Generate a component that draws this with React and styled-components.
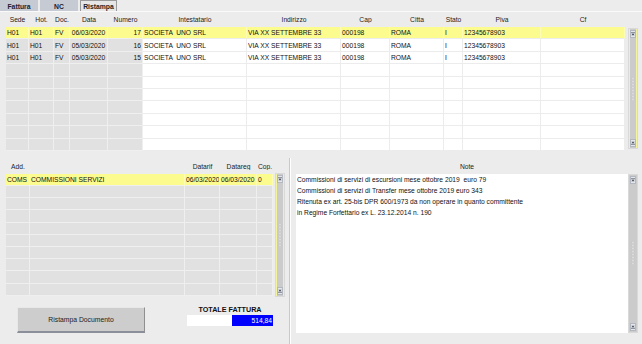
import React from 'react';
import styled, { createGlobalStyle } from 'styled-components';

const GlobalStyle = createGlobalStyle`
  html, body { margin: 0; padding: 0; background: #ececec; }
  body { font-family: "Liberation Sans", Arial, sans-serif; }
`;

const topCols = [
  { key: 'sede', title: 'Sede', w: 23, gray: true },
  { key: 'hot', title: 'Hot.', w: 25, gray: true },
  { key: 'doc', title: 'Doc.', w: 16, gray: true },
  { key: 'data', title: 'Data', w: 38, gray: true, align: 'center' },
  { key: 'num', title: 'Numero', w: 35, gray: true, align: 'right' },
  { key: 'int', title: 'Intestatario', w: 104 },
  { key: 'ind', title: 'Indirizzo', w: 94 },
  { key: 'cap', title: 'Cap', w: 49 },
  { key: 'citta', title: 'Citta', w: 54 },
  { key: 'stato', title: 'Stato', w: 19 },
  { key: 'piva', title: 'Piva', w: 78 },
  { key: 'cf', title: 'Cf', w: 84 },
];

const topRows = [
  { sede: 'H01', hot: 'H01', doc: 'FV', data: '06/03/2020', num: '17', int: 'SOCIETA  UNO SRL', ind: 'VIA XX SETTEMBRE 33', cap: '000198', citta: 'ROMA', stato: 'I', piva: '12345678903', cf: '' },
  { sede: 'H01', hot: 'H01', doc: 'FV', data: '05/03/2020', num: '16', int: 'SOCIETA  UNO SRL', ind: 'VIA XX SETTEMBRE 33', cap: '000198', citta: 'ROMA', stato: 'I', piva: '12345678903', cf: '' },
  { sede: 'H01', hot: 'H01', doc: 'FV', data: '05/03/2020', num: '15', int: 'SOCIETA  UNO SRL', ind: 'VIA XX SETTEMBRE 33', cap: '000198', citta: 'ROMA', stato: 'I', piva: '12345678903', cf: '' },
];

const addCols = [
  { key: 'add', title: 'Add.', w: 24, gray: true },
  { key: 'desc', title: '', w: 155, gray: true },
  { key: 'rif', title: 'Datarif', w: 35, gray: true },
  { key: 'reg', title: 'Datareg', w: 37, gray: true },
  { key: 'cop', title: 'Cop.', w: 16, gray: true },
];

const addRows = [
  { add: 'COMS', desc: 'COMMISSIONI SERVIZI', rif: '06/03/2020', reg: '06/03/2020', cop: '0' },
];

const notes = [
  'Commissioni di servizi di escursioni mese ottobre 2019  euro 79',
  'Commissioni di servizi di Transfer mese ottobre 2019 euro 343',
  'Ritenuta ex art. 25-bis DPR 600/1973 da non operare in quanto committente',
  'in Regime Forfettario ex L. 23.12.2014 n. 190',
];

const Page = styled.div`
  width: 642px;
  height: 344px;
  background: #ececec;
  display: flex;
  flex-direction: column;
  overflow: hidden;
  font-size: 6.7px;
  color: #111;
`;

const TabBar = styled.div`
  height: 11px;
  display: flex;
  align-items: stretch;
  gap: 2px;
  border-bottom: 1px solid #fafafa;
  background: #ececec;
`;

const Tab = styled.div`
  width: ${p => p.$w}px;
  display: flex;
  align-items: center;
  justify-content: center;
  font-weight: bold;
  font-size: 6.8px;
  color: ${p => (p.$active ? '#222' : '#1c2333')};
  background: ${p => (p.$active ? '#e6e6e6' : '#c5cad3')};
  border: 1px solid ${p => (p.$active ? '#9a9a9a' : '#c5cad3')};
  border-bottom: none;
  box-sizing: border-box;
`;

const TopPanel = styled.div`
  display: flex;
  gap: 3px;
  padding: 0 4px 0 6px;
`;

const GridBox = styled.div`
  display: flex;
  flex-direction: column;
`;

const HeaderRow = styled.div`
  display: flex;
  height: ${p => p.$h}px;
  align-items: center;
`;

const HeadCell = styled.div`
  width: ${p => p.$w}px;
  text-align: center;
  white-space: nowrap;
  overflow: hidden;
  color: #222;
`;

const Row = styled.div`
  display: flex;
  height: ${p => p.$h}px;
`;

const Cell = styled.div`
  width: ${p => p.$w}px;
  box-sizing: border-box;
  padding: 0 1px;
  display: flex;
  align-items: center;
  justify-content: ${p => (p.$align === 'right' ? 'flex-end' : p.$align === 'center' ? 'center' : 'flex-start')};
  white-space: pre;
  overflow: hidden;
  background: ${p => (p.$hl ? '#fbfb8e' : p.$gray ? '#e1e1e1' : '#ffffff')};
  border-right: 1px solid ${p => (p.$hl ? 'rgba(255,255,255,0.35)' : p.$gray ? '#efefef' : '#ececec')};
  border-bottom: 1px solid ${p => (p.$gray ? '#efefef' : '#ececec')};
`;

const ScrollBar = styled.div`
  width: 10px;
  height: ${p => p.$h}px;
  margin-top: ${p => p.$top}px;
  box-sizing: border-box;
  border: 1px solid #d9d9d9;
  background: #cbcbcb;
  display: flex;
  flex-direction: column;
  align-items: stretch;
  box-shadow: ${p => (p.$yellow ? 'inset 1px 0 0 #f4f49a, inset -1px 0 0 #f4f49a' : 'none')};
`;

const ScrollBtn = styled.div`
  height: 8px;
  margin: 1px;
  box-sizing: border-box;
  background: #e4e6ea;
  border: 1px solid #b3b7bf;
  display: flex;
  align-items: center;
  justify-content: center;
`;

const Track = styled.div`
  flex: 1;
  display: flex;
  align-items: center;
  justify-content: center;
`;

const Lower = styled.div`
  flex: 1;
  display: flex;
  margin-top: 4px;
`;

const LeftPane = styled.div`
  width: 289px;
  display: flex;
  flex-direction: column;
  padding: 5px 0 0 6px;
  box-sizing: border-box;
`;

const AddArea = styled.div`
  display: flex;
  gap: 2px;
`;

const Divider = styled.div`
  width: 1px;
  border-left: 1px solid #c9c9c9;
  background: #fff;
  margin-top: 3px;
`;

const ActionBar = styled.div`
  display: flex;
  align-items: flex-start;
  gap: 42px;
  margin: 10px 0 0 11px;
`;

const Button = styled.button`
  width: 128px;
  height: 26px;
  background: #cdcdcd;
  border: 1px solid #e8e8e8;
  border-right-color: #8f8f8f;
  border-bottom: 2px solid #8a8f99;
  font-family: "Liberation Sans", Arial, sans-serif;
  font-size: 6.8px;
  color: #222;
  padding: 0;
  cursor: pointer;
`;

const TotalBlock = styled.div`
  width: 86px;
  display: flex;
  flex-direction: column;
  align-items: center;
  gap: 1px;
  margin-top: -1px;
`;

const TotalLabel = styled.div`
  font-weight: bold;
  font-size: 7.2px;
  color: #111;
  height: 8px;
  line-height: 8px;
`;

const TotalBox = styled.div`
  width: 86px;
  height: 11px;
  background: #fff;
  display: flex;
  justify-content: flex-end;
`;

const TotalValue = styled.div`
  width: 40px;
  background: #0000ff;
  color: #fff;
  text-align: right;
  line-height: 11px;
  padding-right: 1px;
`;

const RightPane = styled.div`
  flex: 1;
  display: flex;
  flex-direction: column;
  padding: 5px 4px 0 5px;
`;

const NoteHead = styled.div`
  height: 14px;
  display: flex;
  align-items: center;
  justify-content: center;
  color: #222;
`;

const NoteArea = styled.div`
  display: flex;
  height: 159px;
`;

const NoteText = styled.div`
  width: 332px;
  background: #fff;
  padding: 0 1px;
  box-sizing: border-box;
  line-height: 11px;
  white-space: pre;
  color: #111;
`;

const Arrow = ({ up }) => (
  <svg width="5" height="4" viewBox="0 0 5 4">
    <rect x="0" y={up ? 0 : 3} width="5" height="1" fill="#5b6170" />
    <polygon points={up ? '0.5,3.5 4.5,3.5 2.5,1.2' : '0.5,0.5 4.5,0.5 2.5,2.8'} fill="#4a5060" />
  </svg>
);

const Grip = () => (
  <svg width="4" height="24" viewBox="0 0 4 24">
    {Array.from({ length: 8 }).map((_, i) => (
      <circle key={i} cx="2" cy={1.5 + i * 3} r="0.9" fill="#f3f3f3" stroke="#a9a9a9" strokeWidth="0.3" />
    ))}
  </svg>
);

const VScroll = ({ h, top, yellow }) => (
  <ScrollBar $h={h} $top={top} $yellow={yellow}>
    <ScrollBtn><Arrow up /></ScrollBtn>
    <Track><Grip /></Track>
    <ScrollBtn><Arrow /></ScrollBtn>
  </ScrollBar>
);

const DataGrid = ({ cols, rows, count, rowH, headH }) => (
  <GridBox>
    <HeaderRow $h={headH}>
      {cols.map(c => (
        <HeadCell key={c.key} $w={c.w}>{c.title}</HeadCell>
      ))}
    </HeaderRow>
    {Array.from({ length: count }).map((_, i) => {
      const r = rows[i];
      return (
        <Row key={i} $h={rowH}>
          {cols.map(c => (
            <Cell key={c.key} $w={c.w} $gray={c.gray} $hl={i === 0} $align={c.align}>
              {r ? r[c.key] : ''}
            </Cell>
          ))}
        </Row>
      );
    })}
  </GridBox>
);

export default function App() {
  return (
    <>
      <GlobalStyle />
      <Page>
        <TabBar>
          <Tab $w={38}>Fattura</Tab>
          <Tab $w={38}>NC</Tab>
          <Tab $w={37} $active>Ristampa</Tab>
        </TabBar>
        <TopPanel>
          <DataGrid cols={topCols} rows={topRows} count={10} rowH={12.4} headH={15} />
          <VScroll h={121} top={16} yellow />
        </TopPanel>
        <Lower>
          <LeftPane>
            <AddArea>
              <DataGrid cols={addCols} rows={addRows} count={10} rowH={12.2} headH={14} />
              <VScroll h={124} top={13} yellow />
            </AddArea>
            <ActionBar>
              <Button>Ristampa Documento</Button>
              <TotalBlock>
                <TotalLabel>TOTALE FATTURA</TotalLabel>
                <TotalBox>
                  <TotalValue>514,84</TotalValue>
                </TotalBox>
              </TotalBlock>
            </ActionBar>
          </LeftPane>
          <Divider />
          <RightPane>
            <NoteHead>Note</NoteHead>
            <NoteArea>
              <NoteText>
                {notes.map((n, i) => (
                  <div key={i}>{n}</div>
                ))}
              </NoteText>
              <VScroll h={159} top={0} />
            </NoteArea>
          </RightPane>
        </Lower>
      </Page>
    </>
  );
}
